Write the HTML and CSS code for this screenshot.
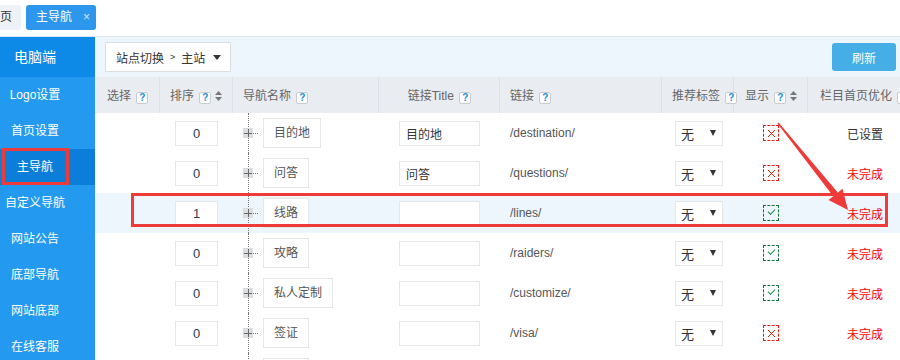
FILE: index.html
```html
<!DOCTYPE html>
<html lang="zh-CN">

<head>
  <meta charset="UTF-8">
  <meta name="viewport" content="width=device-width, initial-scale=1.0">
  <title>主导航</title>

  <link rel="stylesheet" href="styles.css">
</head>

<body>

  <!-- 顶部标签页 -->
  <div class="tabs">
    <span class="tab">页</span>
    <span class="tab tab-active">主导航 <i class="tab-close">×</i></span>
  </div>

  <div class="layout">

    <!-- 左侧菜单 -->
    <aside class="side">
      <div class="side-head">电脑端</div>
      <a class="side-item">Logo设置</a>
      <a class="side-item">首页设置</a>
      <a class="side-item current">主导航</a>
      <a class="side-item">自定义导航</a>
      <a class="side-item">网站公告</a>
      <a class="side-item">底部导航</a>
      <a class="side-item">网站底部</a>
      <a class="side-item">在线客服</a>
    </aside>

    <main class="content">
      <div class="toolbar">
        <div class="site-select">
          <span>站点切换</span><span class="gt">&gt;</span><span>主站</span><span class="caret"></span>
        </div>
        <button class="btn">刷新</button>
      </div>

      <table class="grid">
        <colgroup>
          <col style="width:65px">
          <col style="width:73px">
          <col style="width:146px">
          <col style="width:121px">
          <col style="width:162px">
          <col style="width:72px">
          <col style="width:74px">
          <col style="width:114px">
        </colgroup>
        <thead>
          <tr>
            <th class="pad12">选择 <i class="help">?</i></th>
            <th>排序 <i class="help">?</i> <svg class="sort" width="7" height="10" viewBox="0 0 7 10"><polygon points="3.5,0 7,4 0,4" /><polygon points="0,6 7,6 3.5,10" /></svg></th>
            <th>导航名称 <i class="help">?</i></th>
            <th class="center">链接Title <i class="help">?</i></th>
            <th>链接 <i class="help">?</i></th>
            <th>推荐标签 <i class="help">?</i></th>
            <th class="pad11">显示 <i class="help">?</i> <svg class="sort" width="7" height="10" viewBox="0 0 7 10"><polygon points="3.5,0 7,4 0,4" /><polygon points="0,6 7,6 3.5,10" /></svg></th>
            <th class="pad12 last">栏目首页优化 <i class="help">?</i></th>
          </tr>
        </thead>
        <tbody>
          <tr>
            <td></td>
            <td><input class="num" value="0"></td>
            <td class="tree"><div class="node"><span class="plus"></span><span class="dash"></span><span class="name">目的地</span></div></td>
            <td><input class="title-in" value="目的地"></td>
            <td class="link">/destination/</td>
            <td><span class="pick">无<span class="tri"></span></span></td>
            <td><span class="flag off"></span></td>
            <td class="state done">已设置</td>
          </tr>
          <tr>
            <td></td>
            <td><input class="num" value="0"></td>
            <td class="tree"><div class="node"><span class="plus"></span><span class="dash"></span><span class="name">问答</span></div></td>
            <td><input class="title-in" value="问答"></td>
            <td class="link">/questions/</td>
            <td><span class="pick">无<span class="tri"></span></span></td>
            <td><span class="flag off"></span></td>
            <td class="state">未完成</td>
          </tr>
          <tr class="hl">
            <td></td>
            <td><input class="num" value="1"></td>
            <td class="tree"><div class="node"><span class="plus"></span><span class="dash"></span><span class="name">线路</span></div></td>
            <td><input class="title-in" value=""></td>
            <td class="link">/lines/</td>
            <td><span class="pick">无<span class="tri"></span></span></td>
            <td><span class="flag on"></span></td>
            <td class="state">未完成</td>
          </tr>
          <tr>
            <td></td>
            <td><input class="num" value="0"></td>
            <td class="tree"><div class="node"><span class="plus"></span><span class="dash"></span><span class="name">攻略</span></div></td>
            <td><input class="title-in" value=""></td>
            <td class="link">/raiders/</td>
            <td><span class="pick">无<span class="tri"></span></span></td>
            <td><span class="flag on"></span></td>
            <td class="state">未完成</td>
          </tr>
          <tr>
            <td></td>
            <td><input class="num" value="0"></td>
            <td class="tree"><div class="node"><span class="plus"></span><span class="dash"></span><span class="name">私人定制</span></div></td>
            <td><input class="title-in" value=""></td>
            <td class="link">/customize/</td>
            <td><span class="pick">无<span class="tri"></span></span></td>
            <td><span class="flag on"></span></td>
            <td class="state">未完成</td>
          </tr>
          <tr>
            <td></td>
            <td><input class="num" value="0"></td>
            <td class="tree"><div class="node"><span class="plus"></span><span class="dash"></span><span class="name">签证</span></div></td>
            <td><input class="title-in" value=""></td>
            <td class="link">/visa/</td>
            <td><span class="pick">无<span class="tri"></span></span></td>
            <td><span class="flag off"></span></td>
            <td class="state">未完成</td>
          </tr>
          <!-- 下一行只露出边框 -->
          <tr>
            <td></td>
            <td></td>
            <td class="tree"><div class="node"><span class="plus"></span><span class="dash"></span><span class="name name-empty"></span></div></td>
            <td></td>
            <td></td>
            <td></td>
            <td></td>
            <td></td>
          </tr>
        </tbody>
      </table>
    </main>

  </div>

  <!-- 标注：红框与箭头 -->
  <div class="mark mark-side"></div>
  <div class="mark mark-row"></div>
  <svg class="arrow" width="900" height="360" viewBox="0 0 900 360">
    <polygon points="778.6,122.5 777.4,123.5 833.2,196.3 837.8,192.5" fill="#ef3a3a" />
    <polygon points="848,210 828.5,200 842.5,188.8" fill="#ef3a3a" />
  </svg>

</body>

</html>
```

FILE: styles.css
```css
* {
  box-sizing: border-box;
}

body {
  margin: 0;
  width: 900px;
  height: 360px;
  overflow: hidden;
  position: relative;
  font-family: "Liberation Sans", "Noto Sans CJK SC", sans-serif;
  font-size: 12px;
  color: #333;
}

/* 顶部标签页 */
.tabs {
  height: 37px;
  display: flex;
  align-items: flex-start;
  gap: 5px;
  padding-top: 5px;
  border-bottom: 1px solid #dfe5ee;
}

.tab {
  height: 25px;
  line-height: 25px;
  padding: 0 9px 0 0;
  background: #eef1f6;
  border-radius: 0 3px 3px 0;
}

.tab-active {
  display: flex;
  gap: 11px;
  padding: 0 6px 0 10px;
  background: #2c97ec;
  color: #fff;
  border-radius: 3px;
}

.tab-close {
  font-style: normal;
  color: #cfe6fb;
}

.layout {
  display: flex;
  height: 323px;
}

/* 左侧菜单 */
.side {
  width: 95px;
  flex: none;
  background: #2499f0;
  display: flex;
  flex-direction: column;
}

.side-head {
  height: 40px;
  line-height: 40px;
  padding-right: 25px;
  text-align: center;
  font-size: 14px;
  color: #fff;
  background: #0d89e8;
}

.side-item {
  height: 36px;
  line-height: 36px;
  padding-right: 25px;
  text-align: center;
  color: #fff;
}

.side-item.current {
  background: #0a7ed9;
}

.content {
  flex: 1;
  min-width: 0;
  overflow: hidden;
}

.toolbar {
  height: 40px;
  display: flex;
  align-items: center;
  justify-content: space-between;
  padding: 0 4px 0 10px;
  background: #eef6fd;
}

.site-select {
  width: 126px;
  height: 30px;
  display: flex;
  align-items: center;
  padding-left: 10px;
  background: #fff;
  border: 1px solid #dcdfe6;
}

.site-select .gt {
  font-size: 9px;
  margin: 0 6px;
}

.caret {
  margin-left: 8px;
  border-left: 4px solid transparent;
  border-right: 4px solid transparent;
  border-top: 5px solid #333;
}

.btn {
  width: 64px;
  height: 28px;
  border: 0;
  border-radius: 3px;
  background: #46aee6;
  color: #fff;
  font: inherit;
}

/* 表格 */
.grid {
  table-layout: fixed;
  width: 827px;
  border-collapse: collapse;
}

.grid th {
  height: 36px;
  padding: 0 0 0 10px;
  text-align: left;
  font-weight: normal;
  color: #666;
  white-space: nowrap;
  background: linear-gradient(#dce1e7, #dce1e7) right / 1px 100% no-repeat, #e9edf2;
}

.grid th.pad12 {
  padding-left: 12px;
}

.grid th.pad11 {
  padding-left: 11px;
}

.grid th.center {
  padding-left: 0;
  text-align: center;
}

.grid th.last {
  background: #e9edf2;
}

.help {
  display: inline-block;
  width: 12px;
  height: 12px;
  line-height: 10px;
  margin-left: 2px;
  vertical-align: -1px;
  text-align: center;
  font-style: normal;
  font-weight: bold;
  font-size: 10px;
  color: #1a8ee0;
  background: #fff;
  border: 1px solid #c9ccd1;
  border-radius: 2px;
}

.sort {
  vertical-align: -1px;
  fill: #777;
}

.grid td {
  height: 40px;
  padding: 0;
  vertical-align: middle;
  white-space: nowrap;
}

.grid tr.hl td {
  background: #eef6fd;
}

.num,
.title-in {
  display: block;
  height: 25px;
  border: 1px solid #e6e6e6;
  background: #fff;
  font: inherit;
  color: #333;
  outline: none;
}

.num {
  width: 43px;
  margin-left: 15px;
  text-align: center;
  font-size: 13px;
  color: #2d3b55;
}

.title-in {
  width: 81px;
  margin-left: 20px;
  padding: 0 6px;
}

/* 树形结构 */
.tree {
  position: relative;
}

.tree::before {
  content: "";
  position: absolute;
  left: 15px;
  top: 0;
  bottom: 0;
  border-left: 1px dotted #777;
}

.node {
  position: relative;
  display: flex;
  align-items: center;
  padding-left: 10px;
}

.plus {
  width: 10px;
  height: 10px;
  background:
    linear-gradient(#666, #666) center / 8px 1px no-repeat,
    linear-gradient(#666, #666) center / 1px 8px no-repeat,
    #dcdde0;
}

.dash {
  width: 5px;
  margin-right: 5px;
  border-top: 1px dotted #777;
}

.name {
  height: 30px;
  line-height: 28px;
  padding: 0 10px;
  border: 1px solid #e6e6e6;
  background: #fff;
  color: #555;
}

.name-empty {
  width: 46px;
}

.link {
  padding-left: 10px !important;
  color: #555;
}

.pick {
  display: flex;
  align-items: center;
  justify-content: space-between;
  width: 48px;
  height: 25px;
  margin-left: 13px;
  padding: 0 6px 0 5px;
  border: 1px solid #e6e6e6;
  background: #fff;
  font-size: 13px;
}

.tri {
  border-left: 3.5px solid transparent;
  border-right: 3.5px solid transparent;
  border-top: 6px solid #333;
}

/* 显示状态图标 */
.flag {
  display: block;
  width: 16px;
  height: 16px;
  margin-left: 29px;
  border: 1px dashed;
}

.flag.off {
  border-color: #e8191b;
  background:
    linear-gradient(45deg, transparent 44%, #e8191b 44%, #e8191b 56%, transparent 56%) center / 7px 7px no-repeat,
    linear-gradient(-45deg, transparent 44%, #e8191b 44%, #e8191b 56%, transparent 56%) center / 7px 7px no-repeat;
}

.flag.on {
  position: relative;
  border-color: #16733a;
}

.flag.on::after {
  content: "";
  position: absolute;
  left: 4px;
  top: 3px;
  width: 6px;
  height: 3px;
  border-left: 1.5px solid #1f8a4a;
  border-bottom: 1.5px solid #1f8a4a;
  transform: rotate(-45deg);
}

.state {
  padding-left: 39px !important;
  color: #f00;
}

.state.done {
  color: #333;
}

/* 标注 */
.mark {
  position: absolute;
  border: 3px solid #ef3a3a;
}

.mark-side {
  left: 2px;
  top: 148px;
  width: 67px;
  height: 37px;
}

.mark-row {
  left: 131px;
  top: 193px;
  width: 757px;
  height: 34px;
}

.arrow {
  position: absolute;
  left: 0;
  top: 0;
  pointer-events: none;
}
```
